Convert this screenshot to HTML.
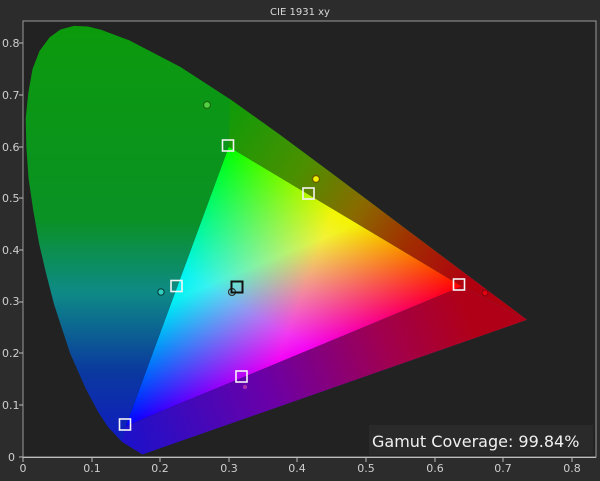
<!DOCTYPE html>
<html><head><style>
html,body{margin:0;padding:0;background:#2c2c2c;}
svg{display:block;}
text{font-family:"DejaVu Sans","Liberation Sans",sans-serif;}
</style></head><body>
<svg width="600" height="481" viewBox="0 0 600 481" xmlns="http://www.w3.org/2000/svg">
<defs>
<linearGradient id="lv" x1="0" y1="24" x2="0" y2="457" gradientUnits="userSpaceOnUse">
<stop offset="0" stop-color="#0c9a0c"/>
<stop offset="0.45" stop-color="#0a9224"/>
<stop offset="0.62" stop-color="#0e8a86"/>
<stop offset="0.8" stop-color="#0a3a9e"/>
<stop offset="1" stop-color="#1214c8"/>
</linearGradient>
<linearGradient id="rr" x1="228.8" y1="120" x2="462" y2="286.4" gradientUnits="userSpaceOnUse">
<stop offset="0" stop-color="#149a08"/>
<stop offset="0.3" stop-color="#4a9000"/>
<stop offset="0.55" stop-color="#8a6a00"/>
<stop offset="0.75" stop-color="#a03000"/>
<stop offset="1" stop-color="#b00010"/>
</linearGradient>
<linearGradient id="bb" x1="126" y1="426" x2="462" y2="300" gradientUnits="userSpaceOnUse">
<stop offset="0" stop-color="#2010c8"/>
<stop offset="0.4" stop-color="#6a00a8"/>
<stop offset="0.75" stop-color="#a00050"/>
<stop offset="1" stop-color="#b00018"/>
</linearGradient>
<linearGradient id="gR" x1="462" y1="286.4" x2="211.4" y2="194" gradientUnits="userSpaceOnUse">
<stop offset="0" stop-color="#ff0000"/><stop offset="0.55" stop-color="#ff0000" stop-opacity="0.95"/><stop offset="1" stop-color="#ff0000" stop-opacity="0"/>
</linearGradient>
<linearGradient id="gG" x1="228.8" y1="146.8" x2="312.4" y2="348.5" gradientUnits="userSpaceOnUse">
<stop offset="0" stop-color="#00ff00"/><stop offset="0.55" stop-color="#00ff00" stop-opacity="0.95"/><stop offset="1" stop-color="#00ff00" stop-opacity="0"/>
</linearGradient>
<linearGradient id="gB" x1="125.9" y1="426" x2="276.1" y2="175.1" gradientUnits="userSpaceOnUse">
<stop offset="0" stop-color="#0000ff"/><stop offset="0.55" stop-color="#0000ff" stop-opacity="0.95"/><stop offset="1" stop-color="#0000ff" stop-opacity="0"/>
</linearGradient>
</defs>
<rect x="0" y="0" width="600" height="481" fill="#2c2c2c"/>
<text x="300" y="15" fill="#d8d8d8" font-size="10" text-anchor="middle">CIE 1931 xy</text>
<rect x="23" y="21" width="573" height="436" fill="#222222" stroke="#9a9a9a" stroke-width="1"/>
<!-- locus -->
<path d="M142.4,454.4 L121.8,441.6 L108.1,427.1 L98.2,412.1 L85.6,388.4 L70.1,353.2 L54.1,304.5 L46,273 L39.1,243.6 L33.2,210 L28.6,178.7 L26.4,148 L25.7,118.5 L28.3,93 L32.5,69.1 L39.5,51 L49.7,37.2 L60.5,29.5 L74,25.9 L88,26.5 L101.3,29.9 L129.1,40.3 L180.5,67.0 L229.9,99.1 L279,134.1 L327.7,170.2 L374.6,205.4 L453.1,264.4 L497.4,297.6 L527,319.8 Z" fill="url(#lv)"/>
<path d="M228.8,146.8 L229.9,99.1 L279,134.1 L327.7,170.2 L374.6,205.4 L453.1,264.4 L497.4,297.6 L527,319.8 L462,286.4 Z" fill="url(#rr)"/>
<path d="M125.9,426 L462,286.4 L527,319.8 L142.4,454.4 L121.8,441.6 Z" fill="url(#bb)"/>
<g style="isolation:isolate">
<polygon points="462,286.4 228.8,146.8 125.9,426" fill="#000"/>
<polygon points="462,286.4 228.8,146.8 125.9,426" fill="url(#gR)" style="mix-blend-mode:screen"/>
<polygon points="462,286.4 228.8,146.8 125.9,426" fill="url(#gG)" style="mix-blend-mode:screen"/>
<polygon points="462,286.4 228.8,146.8 125.9,426" fill="url(#gB)" style="mix-blend-mode:screen"/>
</g>
<!-- measured circles -->
<circle cx="207" cy="105" r="3.5" fill="#50d040" stroke="#1a6a10" stroke-width="1.2"/>
<circle cx="316" cy="179" r="3.5" fill="#f0f000" stroke="#6a5a00" stroke-width="1.2"/>
<circle cx="485" cy="293" r="3" fill="#e00010" stroke="#800010" stroke-width="1"/>
<circle cx="161" cy="292" r="3.2" fill="#30d0c0" stroke="#0a4040" stroke-width="1.2"/>
<circle cx="232" cy="292" r="3.5" fill="none" stroke="#333" stroke-width="1.2"/>
<circle cx="245" cy="387" r="2" fill="#b030b0"/>
<!-- target squares -->
<g fill="none" stroke="#f4f4f4" stroke-width="1.6">
<rect x="222.5" y="140" width="11" height="11"/>
<rect x="453.5" y="279" width="11" height="11"/>
<rect x="119.5" y="419" width="11" height="11"/>
<rect x="171" y="280.5" width="11" height="11"/>
<rect x="303" y="188" width="11" height="11"/>
<rect x="236" y="371" width="11" height="11"/>
</g>
<rect x="231.5" y="281.5" width="11" height="11" fill="none" stroke="#111" stroke-width="2"/>
<!-- legend -->
<rect x="369" y="425" width="224" height="30" fill="#2a2a2a"/>
<text x="372" y="447" fill="#f0f0f0" font-size="16" font-family="Liberation Sans,sans-serif">Gamut Coverage:  99.84%</text>
<!-- axes -->
<g fill="#cfcfcf" font-size="11">
<text x="2" y="47">0.8</text><text x="2" y="99">0.7</text><text x="2" y="151">0.6</text><text x="2" y="202">0.5</text>
<text x="2" y="254">0.4</text><text x="2" y="305">0.3</text><text x="2" y="357">0.2</text><text x="2" y="409">0.1</text><text x="8" y="461">0</text>
</g>
<g fill="#cfcfcf" font-size="11" text-anchor="middle">
<text x="23" y="472">0</text><text x="92" y="472">0.1</text><text x="160" y="472">0.2</text><text x="229" y="472">0.3</text>
<text x="297" y="472">0.4</text><text x="366" y="472">0.5</text><text x="435" y="472">0.6</text><text x="503" y="472">0.7</text><text x="572" y="472">0.8</text>
</g>
<g stroke="#bdbdbd" stroke-width="1">
<line x1="23" y1="457.5" x2="596" y2="457.5"/>
<line x1="23" y1="457" x2="23" y2="462"/><line x1="92" y1="457" x2="92" y2="462"/><line x1="160" y1="457" x2="160" y2="462"/>
<line x1="229" y1="457" x2="229" y2="462"/><line x1="297" y1="457" x2="297" y2="462"/><line x1="366" y1="457" x2="366" y2="462"/>
<line x1="435" y1="457" x2="435" y2="462"/><line x1="503" y1="457" x2="503" y2="462"/><line x1="572" y1="457" x2="572" y2="462"/>
<line x1="19" y1="43" x2="23" y2="43"/><line x1="19" y1="95" x2="23" y2="95"/><line x1="19" y1="147" x2="23" y2="147"/>
<line x1="19" y1="198" x2="23" y2="198"/><line x1="19" y1="250" x2="23" y2="250"/><line x1="19" y1="302" x2="23" y2="302"/>
<line x1="19" y1="353" x2="23" y2="353"/><line x1="19" y1="405" x2="23" y2="405"/><line x1="19" y1="457" x2="23" y2="457"/>
</g>
</svg>
</body></html>
